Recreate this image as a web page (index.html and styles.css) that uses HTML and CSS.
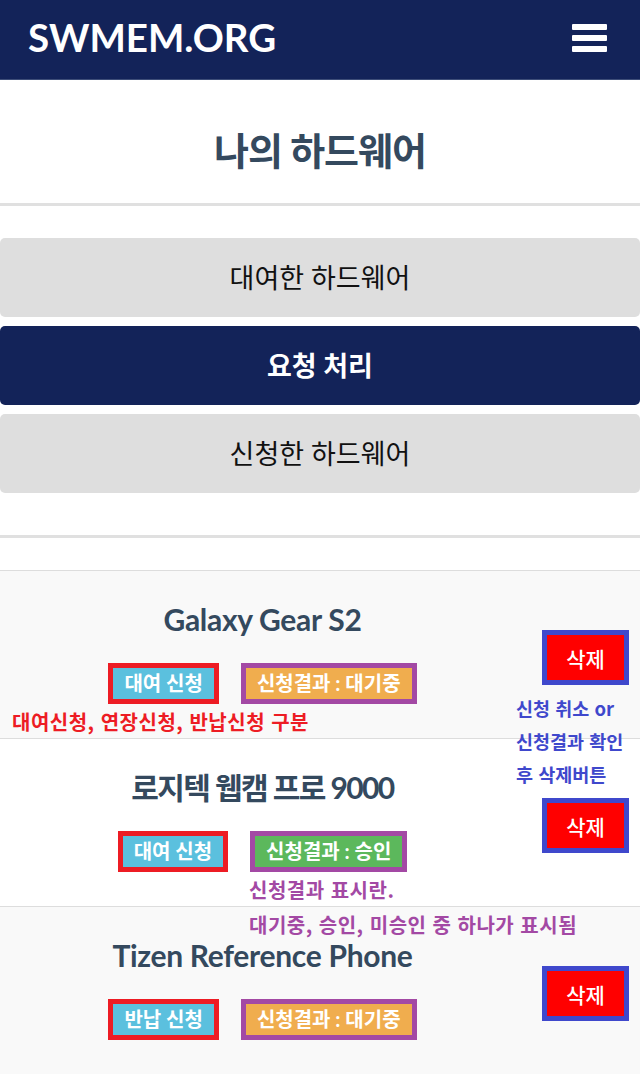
FILE: index.html
```html
<!DOCTYPE html>
<html lang="ko">
<head>
    <meta charset="UTF-8">
    <meta name="viewport" content="width=device-width, initial-scale=1.0">
    <title>나의 하드웨어</title>
    <link rel="stylesheet" href="styles.css">
</head>
<body>
    <header class="topbar">
        <div class="logo">SWMEM.ORG</div>
        <div class="menu-btn">
            <span></span>
            <span></span>
            <span></span>
        </div>
    </header>

    <h1 class="page-title">나의 하드웨어</h1>

    <div class="tabs">
        <a class="tab">대여한 하드웨어</a>
        <a class="tab active">요청 처리</a>
        <a class="tab">신청한 하드웨어</a>
    </div>

    <div class="list">
        <div class="item odd">
            <div class="item-info">
                <h3 class="item-name">Galaxy Gear S2</h3>
                <div class="tags">
                    <span class="mark red"><span class="label info">대여 신청</span></span>
                    <span class="mark purple"><span class="label warning">신청결과 : 대기중</span></span>
                </div>
            </div>
            <div class="item-action">
                <span class="mark blue"><button class="btn-delete">삭제</button></span>
            </div>
            <!-- annotations -->
            <p class="note note-red">대여신청, 연장신청, 반납신청 구분</p>
            <p class="note note-blue">신청 취소 or<br>신청결과 확인<br>후 삭제버튼</p>
        </div>

        <div class="item">
            <div class="item-info">
                <h3 class="item-name ko">로지텍 웹캠 프로 9000</h3>
                <div class="tags">
                    <span class="mark red"><span class="label info">대여 신청</span></span>
                    <span class="mark purple"><span class="label success">신청결과 : 승인</span></span>
                </div>
            </div>
            <div class="item-action">
                <span class="mark blue"><button class="btn-delete">삭제</button></span>
            </div>
            <p class="note note-purple">신청결과 표시란.<br>대기중, 승인, 미승인 중 하나가 표시됨</p>
        </div>

        <div class="item odd">
            <div class="item-info">
                <h3 class="item-name">Tizen Reference Phone</h3>
                <div class="tags">
                    <span class="mark red"><span class="label info">반납 신청</span></span>
                    <span class="mark purple"><span class="label warning">신청결과 : 대기중</span></span>
                </div>
            </div>
            <div class="item-action">
                <span class="mark blue"><button class="btn-delete">삭제</button></span>
            </div>
        </div>
    </div>
</body>
</html>
```

FILE: styles.css
```css
body {
    margin: 0;
    font-family: Lato, "Noto Sans CJK KR", sans-serif;
    background-color: #fff;
    color: #000;
    overflow: hidden;
}
.topbar {
    height: 79px;
    background-color: #132359;
    border-bottom: 1px solid #3d4d78;
    display: flex;
    align-items: center;
    justify-content: space-between;
    padding: 0 33px 0 28px;
}
.logo {
    color: #fff;
    font-size: 38.5px;
    font-weight: 700;
    line-height: 40px;
    margin-bottom: 6px;
}
.menu-btn {
    display: flex;
    flex-direction: column;
    gap: 5px;
    margin-bottom: 3px;
}
.menu-btn span {
    display: block;
    width: 35px;
    height: 6px;
    background: #fff;
    border-radius: 1px;
}
.page-title {
    margin: 0;
    padding: 48px 0 31px;
    text-align: center;
    font-size: 38px;
    line-height: 44px;
    font-weight: 700;
    color: #34495e;
    letter-spacing: -1px;
    border-bottom: 3px solid #e0e0e0;
}
.tabs {
    padding: 32px 0 42px;
    border-bottom: 3px solid #e0e0e0;
    display: flex;
    flex-direction: column;
    gap: 9px;
}
.tab {
    display: block;
    height: 79px;
    line-height: 79px;
    text-align: center;
    background-color: #dedede;
    border-radius: 5px;
    font-size: 27px;
    color: #111;
}
.tab.active {
    background-color: #132359;
    color: #fff;
    font-weight: 700;
}
.list {
    margin-top: 32px;
}
.item {
    position: relative;
    display: flex;
    height: 167px;
    border-top: 1px solid #dddddd;
    background-color: #fff;
}
.item.odd {
    background-color: #f9f9f9;
}
.item-info {
    width: 525px;
    text-align: center;
    padding-top: 31px;
}
.item-name {
    margin: 0;
    font-size: 30px;
    line-height: 34px;
    font-weight: 700;
    color: #34495e;
    letter-spacing: -0.3px;
}
.item-name.ko {
    letter-spacing: -1.6px;
}
.tags {
    display: flex;
    justify-content: center;
    gap: 22px;
    margin-top: 27px;
}
.mark {
    display: inline-block;
    border: 5px solid;
}
.mark.red { border-color: #ed1c24; }
.mark.purple { border-color: #a349a4; }
.mark.blue { border-color: #3f48cc; }
.label {
    display: block;
    padding: 5px 11px 6px;
    font-size: 20px;
    line-height: 20px;
    font-weight: 700;
    color: #fff;
    white-space: nowrap;
}
.label.info { background-color: #5bc0de; }
.label.warning { background-color: #f0ad4e; }
.label.success { background-color: #5cb85c; }
.item-action {
    flex: 1;
    display: flex;
    justify-content: center;
    align-items: flex-start;
    padding: 59px 0 0 6px;
}
.mark.blue {
    line-height: 0;
}
.btn-delete {
    width: 77px;
    height: 45px;
    border: none;
    background-color: #ff0000;
    color: #fff;
    font-family: "Noto Sans CJK KR", sans-serif;
    font-size: 21px;
    font-weight: 500;
    padding: 0;
}
.note {
    position: absolute;
    z-index: 2;
    margin: 0;
    font-family: "Noto Sans CJK KR", sans-serif;
    font-weight: 700;
    white-space: nowrap;
    letter-spacing: 0.5px;
}
.note-red {
    left: 12px;
    top: 138px;
    font-size: 20px;
    line-height: 26px;
    color: #ed1c24;
}
.note-blue {
    left: 516px;
    top: 121px;
    font-size: 18.5px;
    line-height: 33px;
    color: #3f48cc;
    letter-spacing: 0;
}
.note-purple {
    left: 249px;
    top: 133px;
    font-size: 20px;
    line-height: 35px;
    color: #a349a4;
}
```
